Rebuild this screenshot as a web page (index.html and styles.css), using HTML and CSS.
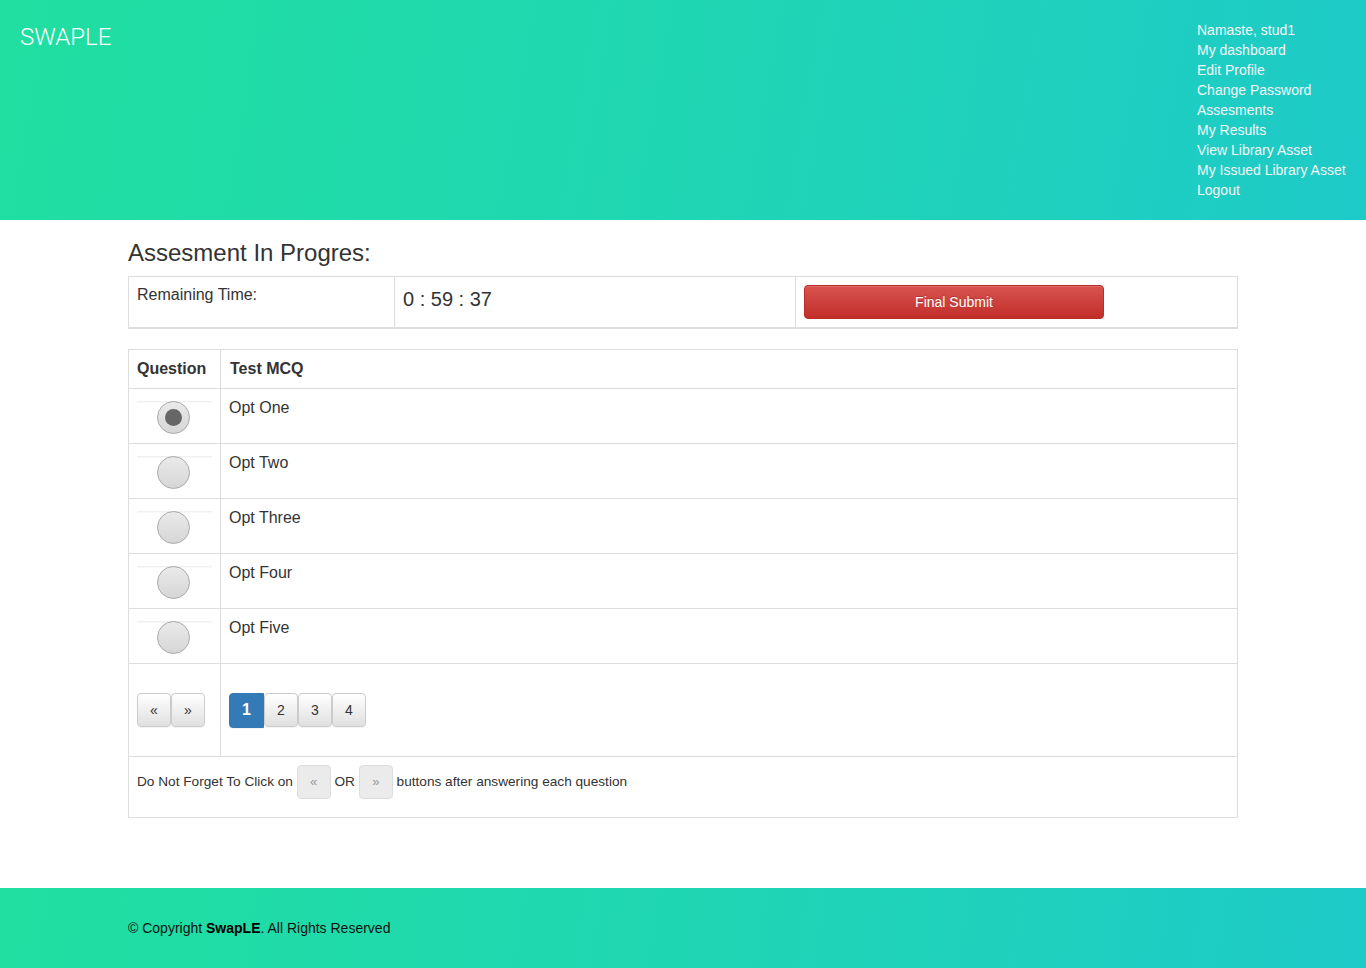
FILE: index.html
```html
<!DOCTYPE html>
<html>
<head>
<meta charset="utf-8">
<title>SWAPLE</title>
<link rel="stylesheet" href="styles.css">
</head>
<body>
<header class="top">
  <div class="brand">SWAPLE</div>
  <ul class="nav">
    <li>Namaste, stud1</li>
    <li><a href="#">My dashboard</a></li>
    <li><a href="#">Edit Profile</a></li>
    <li><a href="#">Change Password</a></li>
    <li><a href="#">Assesments</a></li>
    <li><a href="#">My Results</a></li>
    <li><a href="#">View Library Asset</a></li>
    <li><a href="#">My Issued Library Asset</a></li>
    <li><a href="#">Logout</a></li>
  </ul>
</header>

<main class="container">
  <h3 class="title">Assesment In Progres:</h3>
  <table class="tbl timer">
    <tr>
      <td class="c-label">Remaining Time:</td>
      <td class="c-time">0 : 59 : 37</td>
      <td class="c-btn"><button class="btn-danger">Final Submit</button></td>
    </tr>
  </table>

  <table class="tbl quiz">
    <tr class="head">
      <th class="col1">Question</th>
      <th class="col2">Test MCQ</th>
    </tr>
    <tr class="opt">
      <td class="col1"><div class="radio-box"><span class="radio checked"></span></div></td>
      <td>Opt One</td>
    </tr>
    <tr class="opt">
      <td class="col1"><div class="radio-box"><span class="radio"></span></div></td>
      <td>Opt Two</td>
    </tr>
    <tr class="opt">
      <td class="col1"><div class="radio-box"><span class="radio"></span></div></td>
      <td>Opt Three</td>
    </tr>
    <tr class="opt">
      <td class="col1"><div class="radio-box"><span class="radio"></span></div></td>
      <td>Opt Four</td>
    </tr>
    <tr class="opt">
      <td class="col1"><div class="radio-box"><span class="radio"></span></div></td>
      <td>Opt Five</td>
    </tr>
    <tr class="pager-row">
      <td class="col1"><div class="grp"><span class="btn">&laquo;</span><span class="btn">&raquo;</span></div></td>
      <td><div class="grp"><span class="btn active">1</span><span class="btn">2</span><span class="btn">3</span><span class="btn">4</span></div></td>
    </tr>
    <tr class="note-row">
      <td colspan="2"><div class="note">Do Not Forget To Click on <span class="btn dis">&laquo;</span> OR <span class="btn dis">&raquo;</span> buttons after answering each question</div></td>
    </tr>
  </table>
</main>

<footer class="foot">
  <div class="container">&copy; Copyright <b>SwapLE</b>. All Rights Reserved</div>
</footer>
</body>
</html>
```

FILE: styles.css
```css
* { box-sizing: border-box; }
html, body { margin: 0; padding: 0; }
body {
  font-family: "Liberation Sans", Arial, sans-serif;
  font-size: 14px;
  line-height: 20px;
  color: #333;
  background: #fff;
}
.top {
  height: 220px;
  background: linear-gradient(100deg, #20dfa0 0%, #1fd6b3 50%, #1ecac8 100%);
  display: flex;
  justify-content: space-between;
  align-items: flex-start;
}
.brand {
  color: #fff;
  font-family: Roboto, "Liberation Sans", sans-serif;
  font-weight: 300;
  font-size: 24px;
  line-height: 28px;
  margin: 23px 0 0 20px;
}
.nav {
  list-style: none;
  margin: 20px 20px 0 0;
  padding: 0;
  width: 149px;
  color: #f6f6f6;
}
.nav li { line-height: 20px; height: 20px; white-space: nowrap; }
.nav a { color: #f6f6f6; text-decoration: none; }

.container {
  width: 1110px;
  margin: 0 auto;
}
.title {
  font-size: 24px;
  font-weight: 500;
  line-height: 26px;
  margin: 20px 0 10px;
  color: #333;
}
.tbl {
  width: 100%;
  border-collapse: collapse;
  border: 1px solid #ddd;
  margin-bottom: 20px;
}
.tbl td, .tbl th {
  border: 1px solid #ddd;
  padding: 8px;
  vertical-align: top;
  text-align: left;
}
.timer td { border-bottom: 2px solid #ddd; height: 51px; }
.timer .c-label { width: 266px; font-size: 16px; }
.timer .c-time { width: 401px; font-size: 20px; line-height: 28px; padding-top: 8px; }
.btn-danger {
  width: 300px;
  height: 34px;
  border: 1px solid #b92c28;
  border-radius: 4px;
  background: linear-gradient(#d9534f, #c12e2a);
  color: #fff;
  font-family: "Liberation Sans", Arial, sans-serif;
  font-size: 14px;
  text-shadow: 0 -1px 0 rgba(0,0,0,.2);
  box-shadow: inset 0 1px 0 rgba(255,255,255,.15);
  display: block;
}

.quiz { font-size: 16px; line-height: 22px; }
.quiz .col1 { width: 92px; }
.quiz .col2 { padding-left: 9px; }
.quiz .head th { height: 39px; font-weight: bold; color: #333; }
.quiz .opt td { height: 55px; padding-top: 8px; }
.quiz .opt { height: 55px; }
.radio-box {
  height: 34px;
  margin-top: 4px;
  border-top: 1px solid #f0f0f0;
  box-shadow: inset 0 1px 1px rgba(0,0,0,.03);
  display: flex;
  justify-content: center;
}
.radio {
  width: 33px;
  height: 33px;
  margin: -1px 0 0 -2px;
  border-radius: 50%;
  border: 1px solid #aaa;
  background: linear-gradient(#eaeaea, #d6d6d6);
  display: flex;
  align-items: center;
  justify-content: center;
}
.radio.checked::after {
  content: "";
  width: 17px;
  height: 17px;
  border-radius: 50%;
  background: #666;
}
.pager-row td { height: 93px; vertical-align: middle; padding: 8px; }
.grp { display: flex; }
.btn {
  display: inline-flex;
  align-items: center;
  justify-content: center;
  width: 34px;
  height: 34px;
  font-size: 14px;
  color: #333;
  border: 1px solid #ccc;
  border-radius: 4px;
  background: linear-gradient(#fff, #e0e0e0);
  box-shadow: 0 1px 1px rgba(0,0,0,.05);
}
.btn.active {
  background: #337ab7;
  border-color: #337ab7;
  color: #fff;
  font-weight: bold;
  font-size: 16px;
  width: 35px;
  height: 35px;
  border-radius: 4px 0 0 4px;
}
.note-row td { height: 61px; vertical-align: top; padding: 8px; }
.note { display: flex; align-items: center; font-size: 13.65px; white-space: pre; }
.btn.dis {
  background: #ebebeb;
  border-color: #ddd;
  box-shadow: none;
  color: #999;
  font-size: 13px;
}

.foot {
  margin-top: 70px;
  height: 80px;
  background: linear-gradient(100deg, #20dfa0 0%, #1fd6b3 50%, #1ecac8 100%);
  color: #111;
  display: flex;
  align-items: center;
}
.foot b { font-weight: bold; color: #000; }
```
